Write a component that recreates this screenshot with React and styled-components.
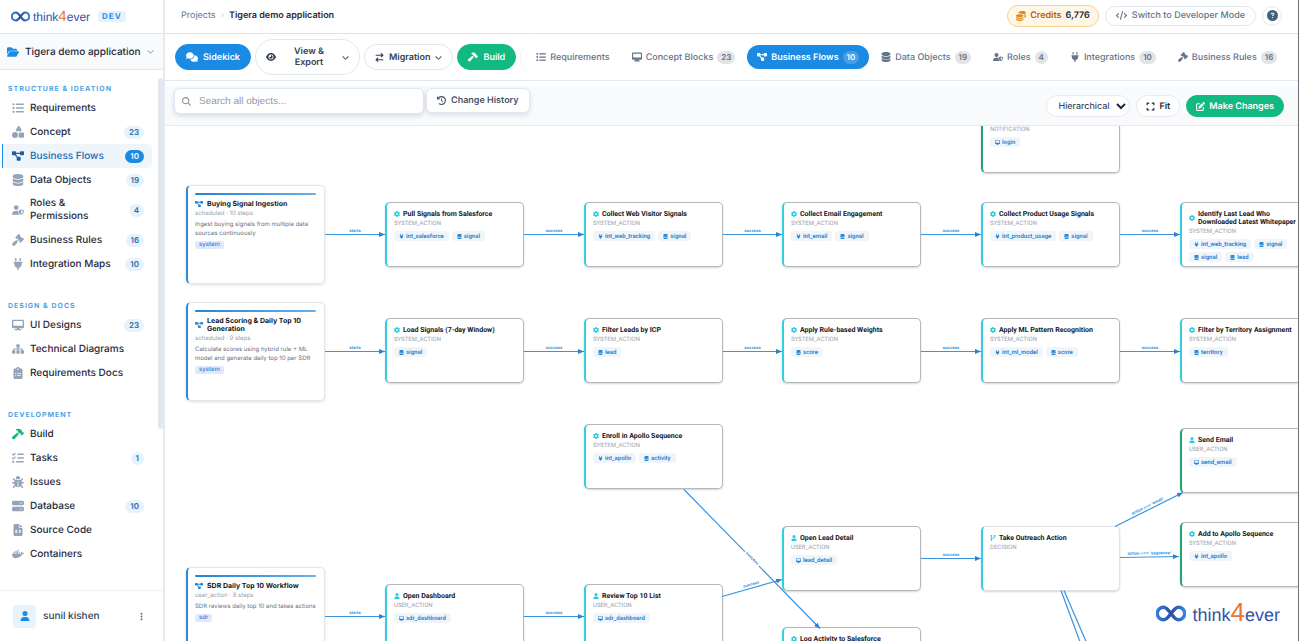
import React, { useState } from 'react'
import styled, { createGlobalStyle, css } from 'styled-components'
import {
  FaArrowRightArrowLeft,
  FaBug,
  FaChevronDown,
  FaCircleQuestion,
  FaClipboardList,
  FaClockRotateLeft,
  FaCode,
  FaCodeBranch,
  FaCoins,
  FaComments,
  FaDatabase,
  FaDesktop,
  FaDiagramProject,
  FaDocker,
  FaEllipsisVertical,
  FaExpand,
  FaEye,
  FaFileCode,
  FaFolderOpen,
  FaGavel,
  FaGear,
  FaHammer,
  FaListCheck,
  FaListUl,
  FaMagnifyingGlass,
  FaPenToSquare,
  FaPlug,
  FaServer,
  FaShapes,
  FaSitemap,
  FaUser,
  FaUserShield
} from 'react-icons/fa6'

const GlobalStyle = createGlobalStyle`
  * {
    box-sizing: border-box;
  }

  body {
    margin: 0;
    font-family: Inter, "Liberation Sans", sans-serif;
    color: #1e293b;
    background: #ffffff;
    text-rendering: geometricPrecision;
  }

  button, input, select {
    font-family: inherit;
    text-rendering: inherit;
    margin: 0;
  }

  button {
    cursor: pointer;
  }

  a {
    color: inherit;
    text-decoration: none;
  }

  svg {
    flex-shrink: 0;
  }
`

const Page = styled.div`
  display: flex;
  height: 100vh;
  overflow: hidden;
  border-right: 1px solid #6b7078;
`

/* Brand */

const BrandWrapper = styled.div`
  display: flex;
  align-items: center;
  gap: ${props => (props.$large ? 6 : 3)}px;
`

const BrandText = styled.span`
  font-family: "Liberation Sans", Arial, sans-serif;
  font-size: ${props => (props.$large ? 18 : 12)}px;
  line-height: ${props => (props.$large ? 26 : 16)}px;
  color: #3552a8;
`

const BrandFour = styled.span`
  font-size: ${props => (props.$large ? 26 : 15)}px;
  color: #ee7430;
`

const Brand = ({ large }) => (
  <BrandWrapper $large={large}>
    <svg width={large ? 30 : 19} height={large ? 17 : 11} viewBox="0 0 30 17" fill="none">
      <defs>
        <linearGradient id="brand-loop" x1="0" y1="0" x2="1" y2="0">
          <stop offset="0" stopColor="#2f7fe0" />
          <stop offset="0.5" stopColor="#2a4fa2" />
          <stop offset="1" stopColor="#3586e0" />
        </linearGradient>
      </defs>
      <path
        d="M15 8.5C12.5 5 10.5 2.2 7.6 2.2a6.2 6.2 0 0 0 0 12.6c2.9 0 4.9-2.8 7.4-6.3s4.5-6.3 7.4-6.3a6.2 6.2 0 0 1 0 12.6c-2.9 0-4.9-2.8-7.4-6.3z"
        stroke="url(#brand-loop)"
        strokeWidth="3.4"
      />
    </svg>
    <BrandText $large={large}>
      think<BrandFour $large={large}>4</BrandFour>ever
    </BrandText>
  </BrandWrapper>
)

/* Sidebar */

const Sidebar = styled.aside`
  display: flex;
  flex-direction: column;
  flex: 0 0 165px;
  min-width: 0;
  border-right: 2px solid #e6eaf0;
`

const SidebarTop = styled.div`
  display: flex;
  align-items: center;
  gap: 8px;
  height: 34px;
  padding: 0 11px;
  border-bottom: 1px solid #e2e8f0;
`

const EnvTag = styled.span`
  padding: 0 4px;
  border-radius: 3px;
  background: #e3f2fd;
  color: #2b8fdd;
  font-size: 8px;
  font-weight: 700;
  line-height: 11px;
  letter-spacing: 1px;
`

const ProjectButton = styled.button`
  display: flex;
  align-items: center;
  gap: 6px;
  height: 36px;
  padding: 0 9px 0 7px;
  border: none;
  border-bottom: 1px solid #e2e8f0;
  background: #f8fafc;
  color: #1e293b;
  font-size: 10px;
  font-weight: 500;
  white-space: nowrap;

  svg:first-child {
    color: #1a8ae2;
  }

  svg:last-child {
    margin-left: auto;
    color: #94a3b8;
  }
`

const NavScroll = styled.div`
  display: flex;
  flex: 1;
  min-height: 0;
`

const Nav = styled.nav`
  flex: 1;
  padding: 13px 6px 0 2px;
  overflow: hidden;
`

const NavSection = styled.section`
  margin-bottom: 24px;
`

const NavHeading = styled.h2`
  margin: 0 0 1px;
  padding-left: 6px;
  color: #4ba3e3;
  font-size: 7px;
  font-weight: 700;
  line-height: 12px;
  letter-spacing: 1px;
`

const NavItem = styled.a`
  display: flex;
  align-items: center;
  gap: 6px;
  min-height: 24px;
  padding: 5px 8px 5px 9px;
  border-left: 1px solid transparent;
  border-radius: 0 4px 4px 0;
  color: #1e293b;
  font-size: 10px;
  font-weight: 500;
  line-height: 13px;

  svg {
    color: ${props => props.$iconColor || '#94a3b8'};
  }

  ${props => props.$active && css`
    border-left-color: #1a8ae2;
    background: #eef5fb;
    color: #1c6cae;

    svg {
      color: #1c5f9c;
    }
  `}
`

const NavCount = styled.span`
  margin: -1px 0 -1px auto;
  padding: 0 5px;
  border-radius: 7px;
  background: ${props => (props.$active ? '#1a8ae2' : '#e6f3fd')};
  color: ${props => (props.$active ? '#ffffff' : '#2a6ea8')};
  font-size: 8px;
  font-weight: 600;
  line-height: 13px;
`

const ScrollTrack = styled.div`
  width: 5px;
  padding: 8px 0 4px;
`

const ScrollThumb = styled.div`
  height: 69%;
  border-radius: 3px;
  background: #e2e8f0;
`

const UserBar = styled.div`
  display: flex;
  align-items: center;
  gap: 7px;
  height: 51px;
  padding: 0 17px 0 13px;
  border-top: 1px solid #eef1f5;
  font-size: 10px;
  font-weight: 500;
  color: #334155;
`

const Avatar = styled.span`
  display: flex;
  align-items: center;
  justify-content: center;
  width: 23px;
  height: 23px;
  border-radius: 4px;
  background: #e6f2fc;
  color: #1a8ae2;
`

const MoreButton = styled.button`
  display: flex;
  margin-left: auto;
  padding: 0;
  border: none;
  background: none;
  color: #64748b;
`

/* Header and toolbars */

const Main = styled.main`
  display: flex;
  flex-direction: column;
  flex: 1;
  min-width: 0;
`

const Header = styled.header`
  display: flex;
  align-items: center;
  justify-content: space-between;
  height: 34px;
  padding: 0 16px 2px 16px;
  border-bottom: 1px solid #dde2e9;
`

const Breadcrumb = styled.div`
  display: flex;
  align-items: center;
  gap: 5px;
  color: #64748b;
  font-size: 9px;
  line-height: 12px;
`

const Separator = styled.span`
  color: #cbd5e1;
`

const CurrentCrumb = styled.span`
  color: #1e293b;
  font-weight: 600;
`

const HeaderActions = styled.div`
  display: flex;
  align-items: center;
  gap: 6px;
`

const HeaderButton = styled.button`
  display: flex;
  align-items: center;
  gap: 5px;
  height: 20px;
  padding: 0 10px;
  border: 1px solid #e2e8f0;
  border-radius: 11px;
  background: #ffffff;
  color: #64748b;
  font-size: 9px;
  font-weight: 500;
`

const CreditsButton = styled(HeaderButton)`
  gap: 4px;
  height: 22px;
  padding: 0 8px;
  border-color: #f9cf8c;
  background: #fff7e6;
  color: #b45f10;
  font-weight: 600;

  svg {
    color: #e08a1e;
  }
`

const CreditsValue = styled.span`
  color: #1e293b;
`

const HelpButton = styled(HeaderButton)`
  width: 20px;
  padding: 0;
  justify-content: center;
  color: #475f7c;
`

const Toolbar = styled.div`
  display: flex;
  align-items: center;
  gap: 4px;
  height: 47px;
  margin-bottom: 5px;
  padding-left: 10px;
  border-bottom: 1px solid #e2e8f0;
  overflow: hidden;
`

const ToolButton = styled.button`
  display: flex;
  align-items: center;
  flex-shrink: 0;
  gap: 5px;
  min-height: 26px;
  padding: 0 10px;
  border: 1px solid ${props => props.$fill || '#e2e8f0'};
  border-radius: 18px;
  background: ${props => props.$fill || '#ffffff'};
  color: ${props => (props.$fill ? '#ffffff' : '#334155')};
  font-size: 9px;
  font-weight: 600;
  line-height: 11px;
  white-space: nowrap;
`

const WideToolButton = styled(ToolButton)`
  justify-content: space-between;
  width: 105px;
  min-height: 36px;
`

const WrappedLabel = styled.span`
  width: 40px;
  text-align: center;
  white-space: normal;
`

const Tabs = styled.nav`
  display: flex;
  align-items: center;
  flex-shrink: 0;
  gap: 2px;
  min-height: 36px;
  padding-left: 5px;
  border-left: 1px solid #f1f4f8;
  border-radius: 18px;
`

const Tab = styled.a`
  display: flex;
  align-items: center;
  gap: 4px;
  height: 24px;
  padding: 0 10px;
  border-radius: 12px;
  background: ${props => (props.$active ? '#1a8ae2' : 'transparent')};
  color: ${props => (props.$active ? '#ffffff' : '#64748b')};
  font-size: 9px;
  font-weight: ${props => (props.$active ? 600 : 500)};
  white-space: nowrap;
`

const TabCount = styled.span`
  padding: 0 4px;
  border-radius: 7px;
  background: ${props => (props.$active ? '#479fe5' : '#e2e4e7')};
  color: ${props => (props.$active ? '#ffffff' : '#64748b')};
  font-size: 8px;
  font-weight: 600;
  line-height: 13px;
`

const CanvasBar = styled.div`
  display: flex;
  justify-content: space-between;
  height: 40px;
  padding: 2px 14px 8px 9px;
  border-bottom: 1px solid #e6eaf0;
  background: #f8fafc;
`

const BarLeft = styled.div`
  display: flex;
  align-items: flex-start;
  gap: 2px;
`

const BarRight = styled.div`
  display: flex;
  align-items: flex-end;
  gap: 6px;
`

const SearchBox = styled.label`
  display: flex;
  align-items: center;
  gap: 8px;
  width: 250px;
  height: 26px;
  padding: 0 7px;
  border: 1px solid #e2e8f0;
  border-radius: 6px;
  background: #ffffff;
  box-shadow: 0 2px 5px rgba(15, 23, 42, 0.14);
  color: #8a94a3;
`

const SearchInput = styled.input`
  flex: 1;
  min-width: 0;
  padding: 0;
  border: none;
  outline: none;
  background: none;
  font-family: "Liberation Sans", Arial, sans-serif;
  font-size: 10px;

  &::placeholder {
    color: #8f99a8;
  }
`

const HistoryButton = styled.button`
  display: flex;
  align-items: center;
  gap: 5px;
  height: 25px;
  padding: 0 10px;
  border: 1px solid #e2e8f0;
  border-radius: 6px;
  background: #ffffff;
  box-shadow: 0 2px 5px rgba(15, 23, 42, 0.12);
  color: #475569;
  font-size: 9px;
  font-weight: 600;
`

const LayoutSelect = styled.select`
  width: 84px;
  height: 22px;
  padding: 0 0 0 7px;
  border: 1px solid #e8ecf1;
  border-radius: 11px;
  background: #ffffff;
  color: #1e293b;
  font-size: 9px;
`

const BarButton = styled.button`
  display: flex;
  align-items: center;
  gap: 4px;
  height: 22px;
  padding: 0 9px;
  border: 1px solid ${props => props.$fill || '#e8ecf1'};
  border-radius: 11px;
  background: ${props => props.$fill || '#ffffff'};
  color: ${props => (props.$fill ? '#ffffff' : '#1e293b')};
  font-size: 9px;
  font-weight: 600;
`

/* Flow canvas */

const Canvas = styled.div`
  position: relative;
  flex: 1;
  min-height: 0;
  overflow: hidden;
  background: #ffffff;
`

const EdgeLayer = styled.svg`
  position: absolute;
  top: 0;
  left: 0;
  width: 100%;
  height: 100%;
`

const EdgeLabel = styled.text`
  fill: #2b8fdd;
  stroke: #ffffff;
  stroke-width: 1px;
  paint-order: stroke;
  font-size: 4px;
  font-weight: 700;
  text-anchor: middle;
`

const NodeCard = styled.article`
  position: absolute;
  left: ${props => props.$x}px;
  top: ${props => props.$y}px;
  width: 139px;
  border-radius: 5px;
  background: #ffffff;
`

const FlowCard = styled(NodeCard)`
  height: 99px;
  padding: 7px 8px 0 7px;
  border: 1px solid #e3e6ea;
  border-left: 2px solid #2f89d4;
  box-shadow: 0 1px 3px rgba(15, 23, 42, 0.14);
`

const StepCard = styled(NodeCard)`
  height: 65px;
  padding: 7px 16px 0 7px;
  border: 1px solid ${props => (props.$soft ? '#dfe3e8' : '#b4b8bd')};
  border-left: 2px solid ${props => props.$accent || '#33cfe0'};
  box-shadow: 0 1px 2px rgba(15, 23, 42, 0.18);
  font-family: Roboto, Inter, sans-serif;
`

const FlowStripe = styled.div`
  height: 2px;
  margin-bottom: 5px;
  border-radius: 1px;
  background: linear-gradient(90deg, #2583d3, #69b1e8);
`

const NodeTitle = styled.h3`
  display: flex;
  align-items: center;
  gap: ${props => (props.$flow ? 4 : 3)}px;
  min-height: 8px;
  margin: 0;
  color: #111827;
  font-size: 7px;
  font-weight: 700;
  line-height: 8px;

  svg {
    color: ${props => (props.$flow ? '#2583d3' : '#22cbe0')};
  }
`

const NodeMeta = styled.p`
  margin: 2px 0 0;
  color: #9aa1ad;
  font-size: 6px;
  line-height: 8px;
`

const FlowText = styled.p`
  margin: 2px 0 0;
  color: #6b7280;
  font-size: 6px;
  line-height: 9px;
`

const PersonaTag = styled.span`
  padding: 0 4px;
  border-radius: 2px;
  background: #e0e9fc;
  color: #3b82d6;
  font-size: 6px;
  font-weight: 500;
  line-height: 8px;
`

const ChipRow = styled.div`
  display: flex;
  flex-wrap: wrap;
  gap: 3px;
  margin-top: 3px;
`

const Chip = styled.span`
  display: flex;
  align-items: center;
  gap: 2px;
  height: 10px;
  padding: 0 5px;
  border-radius: 3px;
  background: #f0f5fa;
  color: #2583d3;
  font-size: 6px;
  font-weight: 600;
  white-space: nowrap;
`

const Watermark = styled.div`
  position: absolute;
  right: 18px;
  bottom: 13px;
`

const navSections = [
  {
    heading: 'STRUCTURE & IDEATION',
    items: [
      { label: 'Requirements', icon: FaListUl },
      { label: 'Concept', icon: FaShapes, count: 23 },
      { label: 'Business Flows', icon: FaDiagramProject, count: 10, active: true },
      { label: 'Data Objects', icon: FaDatabase, count: 19 },
      { label: 'Roles & Permissions', icon: FaUserShield, count: 4 },
      { label: 'Business Rules', icon: FaGavel, count: 16 },
      { label: 'Integration Maps', icon: FaPlug, count: 10 }
    ]
  },
  {
    heading: 'DESIGN & DOCS',
    items: [
      { label: 'UI Designs', icon: FaDesktop, count: 23 },
      { label: 'Technical Diagrams', icon: FaSitemap },
      { label: 'Requirements Docs', icon: FaClipboardList }
    ]
  },
  {
    heading: 'DEVELOPMENT',
    items: [
      { label: 'Build', icon: FaHammer, iconColor: '#12b981' },
      { label: 'Tasks', icon: FaListCheck, count: 1 },
      { label: 'Issues', icon: FaBug },
      { label: 'Database', icon: FaServer, count: 10 },
      { label: 'Source Code', icon: FaFileCode },
      { label: 'Containers', icon: FaDocker }
    ]
  }
]

const tabs = [
  { label: 'Requirements', icon: FaListUl },
  { label: 'Concept Blocks', icon: FaDesktop, count: 23 },
  { label: 'Business Flows', icon: FaDiagramProject, count: 10, active: true },
  { label: 'Data Objects', icon: FaDatabase, count: 19 },
  { label: 'Roles', icon: FaUserShield, count: 4 },
  { label: 'Integrations', icon: FaPlug, count: 10 },
  { label: 'Business Rules', icon: FaGavel, count: 16 }
]

const flows = [
  { x: 21, y: 59, title: 'Buying Signal Ingestion', meta: 'scheduled · 10 steps', text: 'Ingest buying signals from multiple data sources continuously', persona: 'system' },
  { x: 21, y: 176, title: 'Lead Scoring & Daily Top 10 Generation', meta: 'scheduled · 9 steps', text: 'Calculate scores using hybrid rule + ML model and generate daily top 10 per SDR', persona: 'system' },
  { x: 21, y: 441, title: 'SDR Daily Top 10 Workflow', meta: 'user_action · 8 steps', text: 'SDR reviews daily top 10 and takes actions', persona: 'sdr' }
]

const chipIcons = { api: FaPlug, data: FaDatabase, screen: FaDesktop }
const stepIcons = { SYSTEM_ACTION: FaGear, USER_ACTION: FaUser, DECISION: FaCodeBranch }

const green = '#22a56f'

const steps = [
  { x: 816, y: -18, title: '', type: 'NOTIFICATION', accent: green, chips: [['screen', 'login']] },
  { x: 220, y: 76, title: 'Pull Signals from Salesforce', type: 'SYSTEM_ACTION', chips: [['api', 'int_salesforce'], ['data', 'signal']] },
  { x: 419, y: 76, title: 'Collect Web Visitor Signals', type: 'SYSTEM_ACTION', chips: [['api', 'int_web_tracking'], ['data', 'signal']] },
  { x: 617, y: 76, title: 'Collect Email Engagement', type: 'SYSTEM_ACTION', chips: [['api', 'int_email'], ['data', 'signal']] },
  { x: 816, y: 76, title: 'Collect Product Usage Signals', type: 'SYSTEM_ACTION', chips: [['api', 'int_product_usage'], ['data', 'signal']] },
  { x: 1015, y: 76, title: 'Identify Last Lead Who Downloaded Latest Whitepaper', type: 'SYSTEM_ACTION', chips: [['api', 'int_web_tracking'], ['data', 'signal'], ['data', 'signal'], ['data', 'lead']] },
  { x: 220, y: 192, title: 'Load Signals (7-day Window)', type: 'SYSTEM_ACTION', chips: [['data', 'signal']] },
  { x: 419, y: 192, title: 'Filter Leads by ICP', type: 'SYSTEM_ACTION', chips: [['data', 'lead']] },
  { x: 617, y: 192, title: 'Apply Rule-based Weights', type: 'SYSTEM_ACTION', chips: [['data', 'score']] },
  { x: 816, y: 192, title: 'Apply ML Pattern Recognition', type: 'SYSTEM_ACTION', chips: [['api', 'int_ml_model'], ['data', 'score']] },
  { x: 1015, y: 192, title: 'Filter by Territory Assignment', type: 'SYSTEM_ACTION', chips: [['data', 'territory']] },
  { x: 419, y: 298, title: 'Enroll in Apollo Sequence', type: 'SYSTEM_ACTION', chips: [['api', 'int_apollo'], ['data', 'activity']] },
  { x: 617, y: 400, title: 'Open Lead Detail', type: 'USER_ACTION', chips: [['screen', 'lead_detail']] },
  { x: 816, y: 400, title: 'Take Outreach Action', type: 'DECISION', soft: true, chips: [] },
  { x: 1015, y: 302, title: 'Send Email', type: 'USER_ACTION', accent: green, chips: [['screen', 'send_email']] },
  { x: 1015, y: 396, title: 'Add to Apollo Sequence', type: 'SYSTEM_ACTION', accent: green, chips: [['api', 'int_apollo']] },
  { x: 220, y: 458, title: 'Open Dashboard', type: 'USER_ACTION', chips: [['screen', 'sdr_dashboard']] },
  { x: 419, y: 458, title: 'Review Top 10 List', type: 'USER_ACTION', chips: [['screen', 'sdr_dashboard']] },
  { x: 617, y: 501, title: 'Log Activity to Salesforce', type: 'SYSTEM_ACTION', chips: [] }
]

// from, to and an optional label; onLine puts the label on the line itself
const edges = [
  { from: [160, 108], to: [220, 108], label: 'starts' },
  { from: [359, 108], to: [419, 108], label: 'success' },
  { from: [558, 108], to: [617, 108], label: 'success' },
  { from: [756, 108], to: [816, 108], label: 'success' },
  { from: [955, 108], to: [1015, 108], label: 'success' },
  { from: [160, 225], to: [220, 225], label: 'starts' },
  { from: [359, 225], to: [419, 225], label: 'success' },
  { from: [558, 225], to: [617, 225], label: 'success' },
  { from: [756, 225], to: [816, 225], label: 'success' },
  { from: [955, 225], to: [1015, 225], label: 'success' },
  { from: [160, 490], to: [220, 490], label: 'starts' },
  { from: [359, 490], to: [419, 490], label: 'success' },
  { from: [519, 363], to: [655, 502], label: 'success', onLine: true },
  { from: [557, 470], to: [617, 453], label: 'success' },
  { from: [756, 432], to: [816, 432], label: 'success' },
  { from: [950, 400], to: [1018, 366], label: "action === 'email'" },
  { from: [955, 431], to: [1014, 430], label: "action === 'sequence'" },
  { from: [896, 464], to: [926, 545] },
  { from: [899, 464], to: [934, 545] }
]

const Edge = ({ from, to, label, onLine }) => {
  const [x1, y1] = from
  const [x2, y2] = to
  const angle = Math.atan2(y2 - y1, x2 - x1) * 180 / Math.PI
  const place = `translate(${(x1 + x2) / 2} ${(y1 + y2) / 2}) rotate(${angle})`

  return (
    <g>
      <line x1={x1} y1={y1 + 0.5} x2={x2} y2={y2 + 0.5} stroke="#3b93dc" strokeWidth="1.2" markerEnd="url(#arrow)" />
      {onLine && <rect transform={place} x="-10" y="-3" width="20" height="6" fill="#ffffff" />}
      {label && <EdgeLabel transform={place} y={onLine ? 1 : -2}>{label}</EdgeLabel>}
    </g>
  )
}

const FlowNode = ({ flow }) => (
  <FlowCard $x={flow.x} $y={flow.y}>
    <FlowStripe />
    <NodeTitle $flow>
      <FaDiagramProject size={8} />
      {flow.title}
    </NodeTitle>
    <NodeMeta>{flow.meta}</NodeMeta>
    <FlowText>{flow.text}</FlowText>
    <ChipRow>
      <PersonaTag>{flow.persona}</PersonaTag>
    </ChipRow>
  </FlowCard>
)

const StepNode = ({ step }) => {
  const StepIcon = stepIcons[step.type]

  return (
    <StepCard $x={step.x} $y={step.y} $accent={step.accent} $soft={step.soft}>
      <NodeTitle>
        {StepIcon && <StepIcon size={6} />}
        {step.title}
      </NodeTitle>
      <NodeMeta>{step.type}</NodeMeta>
      <ChipRow>
        {step.chips.map(([kind, label], index) => {
          const ChipIcon = chipIcons[kind]
          return (
            <Chip key={index}>
              <ChipIcon size={5} />
              {label}
            </Chip>
          )
        })}
      </ChipRow>
    </StepCard>
  )
}

const App = () => {
  const [search, setSearch] = useState('')
  const [layout, setLayout] = useState('hierarchical')

  return (
    <Page>
      <GlobalStyle />
      <Sidebar>
        <SidebarTop>
          <Brand />
          <EnvTag>DEV</EnvTag>
        </SidebarTop>
        <ProjectButton type="button">
          <FaFolderOpen size={12} />
          Tigera demo application
          <FaChevronDown size={7} />
        </ProjectButton>
        <NavScroll>
          <Nav>
            {navSections.map(section => (
              <NavSection key={section.heading}>
                <NavHeading>{section.heading}</NavHeading>
                {section.items.map(({ label, icon: Icon, count, active, iconColor }) => (
                  <NavItem key={label} href="#" $active={active} $iconColor={iconColor}>
                    <Icon size={12} />
                    {label}
                    {count && <NavCount $active={active}>{count}</NavCount>}
                  </NavItem>
                ))}
              </NavSection>
            ))}
          </Nav>
          <ScrollTrack>
            <ScrollThumb />
          </ScrollTrack>
        </NavScroll>
        <UserBar>
          <Avatar><FaUser size={10} /></Avatar>
          sunil kishen
          <MoreButton type="button" aria-label="Account menu">
            <FaEllipsisVertical size={9} />
          </MoreButton>
        </UserBar>
      </Sidebar>

      <Main>
        <Header>
          <Breadcrumb>
            <a href="#">Projects</a>
            <Separator>›</Separator>
            <CurrentCrumb>Tigera demo application</CurrentCrumb>
          </Breadcrumb>
          <HeaderActions>
            <CreditsButton type="button">
              <FaCoins size={10} />
              Credits
              <CreditsValue>6,776</CreditsValue>
            </CreditsButton>
            <HeaderButton type="button">
              <FaCode size={11} />
              Switch to Developer Mode
            </HeaderButton>
            <HelpButton type="button" aria-label="Help">
              <FaCircleQuestion size={11} />
            </HelpButton>
          </HeaderActions>
        </Header>

        <Toolbar>
          <ToolButton type="button" $fill="#1a8ae2">
            <FaComments size={12} />
            Sidekick
          </ToolButton>
          <WideToolButton type="button">
            <FaEye size={10} />
            <WrappedLabel>View &amp; Export</WrappedLabel>
            <FaChevronDown size={7} />
          </WideToolButton>
          <ToolButton type="button">
            <FaArrowRightArrowLeft size={9} />
            Migration
            <FaChevronDown size={7} />
          </ToolButton>
          <ToolButton type="button" $fill="#12b981">
            <FaHammer size={10} />
            Build
          </ToolButton>
          <Tabs>
            {tabs.map(({ label, icon: Icon, count, active }) => (
              <Tab key={label} href="#" $active={active}>
                <Icon size={10} />
                {label}
                {count && <TabCount $active={active}>{count}</TabCount>}
              </Tab>
            ))}
          </Tabs>
        </Toolbar>

        <CanvasBar>
          <BarLeft>
            <SearchBox>
              <FaMagnifyingGlass size={9} />
              <SearchInput
                type="text"
                aria-label="Search all objects"
                placeholder="Search all objects..."
                value={search}
                onChange={(e) => setSearch(e.target.value)}
              />
            </SearchBox>
            <HistoryButton type="button">
              <FaClockRotateLeft size={9} />
              Change History
            </HistoryButton>
          </BarLeft>
          <BarRight>
            <LayoutSelect
              aria-label="Layout"
              value={layout}
              onChange={(e) => setLayout(e.target.value)}
            >
              <option value="hierarchical">Hierarchical</option>
              <option value="grid">Grid</option>
            </LayoutSelect>
            <BarButton type="button">
              <FaExpand size={9} />
              Fit
            </BarButton>
            <BarButton type="button" $fill="#12b981">
              <FaPenToSquare size={9} />
              Make Changes
            </BarButton>
          </BarRight>
        </CanvasBar>

        <Canvas>
          {flows.map(flow => <FlowNode key={flow.title} flow={flow} />)}
          {steps.map(step => <StepNode key={step.title} step={step} />)}
          <EdgeLayer>
            <defs>
              <marker id="arrow" viewBox="0 0 5 4" refX="5" refY="2" markerWidth="5" markerHeight="4" orient="auto">
                <path d="M0 0L5 2L0 4z" fill="#2b83d0" />
              </marker>
            </defs>
            {edges.map((edge, index) => <Edge key={index} {...edge} />)}
          </EdgeLayer>
          <Watermark>
            <Brand large />
          </Watermark>
        </Canvas>
      </Main>
    </Page>
  )
}

export default App
